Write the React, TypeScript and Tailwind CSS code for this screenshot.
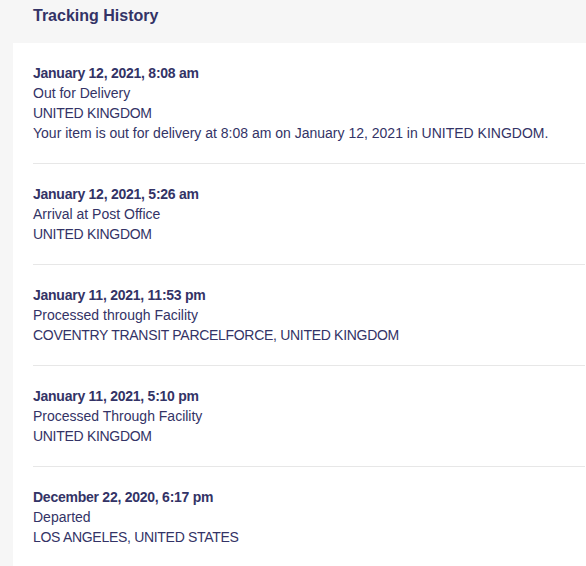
const events = [
  {
    date: "January 12, 2021, 8:08 am",
    status: "Out for Delivery",
    place: "UNITED KINGDOM",
    note: "Your item is out for delivery at 8:08 am on January 12, 2021 in UNITED KINGDOM.",
  },
  { date: "January 12, 2021, 5:26 am", status: "Arrival at Post Office", place: "UNITED KINGDOM" },
  {
    date: "January 11, 2021, 11:53 pm",
    status: "Processed through Facility",
    place: "COVENTRY TRANSIT PARCELFORCE, UNITED KINGDOM",
  },
  { date: "January 11, 2021, 5:10 pm", status: "Processed Through Facility", place: "UNITED KINGDOM" },
  { date: "December 22, 2020, 6:17 pm", status: "Departed", place: "LOS ANGELES, UNITED STATES" },
];

export default function App() {
  return (
    <div className="min-h-screen bg-[#f6f6f6] pl-[13px] font-['Liberation_Sans',Arial,sans-serif] text-[#333366]">
      <h2 className="h-[43px] pl-5 pt-[6px] text-[16px] font-bold leading-5">Tracking History</h2>

      <div className="bg-white">
        <ul className="ml-5 mr-px">
          {events.map((e) => (
            <li key={e.date} className="border-b border-[#e7e7e7] py-5 text-[14px] leading-5">
              <p className="font-bold tracking-[-0.25px]">{e.date}</p>
              <p>{e.status}</p>
              <p className="tracking-[-0.3px]">{e.place}</p>
              {e.note && <p className="whitespace-nowrap">{e.note}</p>}
            </li>
          ))}
        </ul>
      </div>
    </div>
  );
}
